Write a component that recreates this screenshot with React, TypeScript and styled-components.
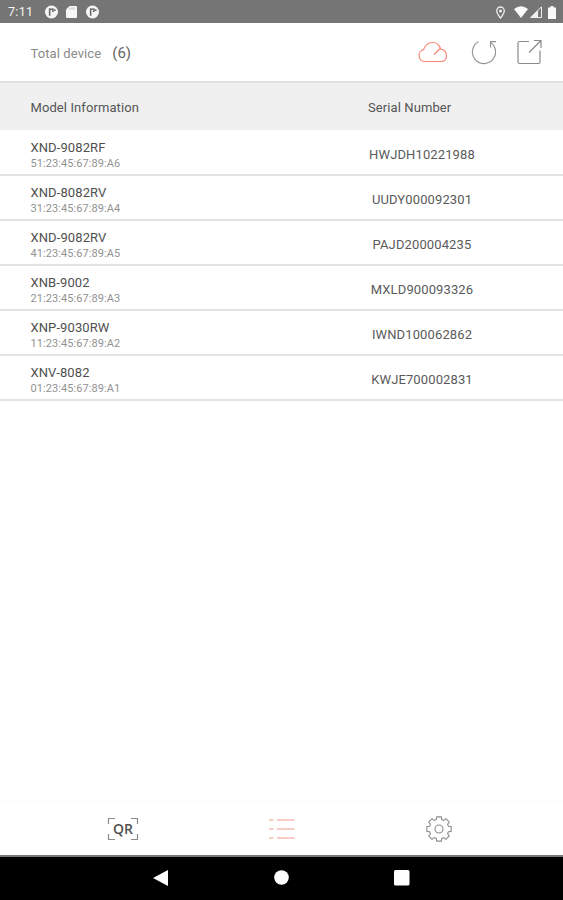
import React from "react";
import styled, { createGlobalStyle } from "styled-components";

const Global = createGlobalStyle`
  * { box-sizing: border-box; }
  body { margin: 0; background: #fff; font-family: Roboto, sans-serif; }
`;

const Screen = styled.div`
  width: 563px;
  height: 900px;
  display: flex;
  flex-direction: column;
  background: #fff;
  overflow: hidden;
`;

const StatusBar = styled.div`
  height: 23px;
  flex: none;
  background: #757575;
  display: flex;
  align-items: center;
  justify-content: space-between;
  padding: 1px 5px 0 8px;
  color: #f4f4f4;
`;

const StatusGroup = styled.div<{ $gap: number }>`
  display: flex;
  align-items: center;
  gap: ${(p) => p.$gap}px;
`;

const Clock = styled.span`
  font-size: 12.5px;
  line-height: 22px;
  letter-spacing: 0.3px;
  width: 28px;
`;

const Icon = styled.svg`
  display: block;
  flex: none;
`;

const TopBar = styled.header`
  height: 58px;
  flex: none;
  display: flex;
  align-items: center;
  padding: 0 20px 0 30.5px;
`;

const Title = styled.h1`
  margin: 0;
  font-size: 13px;
  font-weight: 400;
  color: #8a8a8a;
  letter-spacing: 0.1px;
  padding-top: 3px;
`;

const Count = styled.span`
  margin-left: 11px;
  font-size: 15px;
  color: #666;
  padding-top: 2px;
`;

const Actions = styled.div`
  margin-left: auto;
  display: flex;
  align-items: center;
  gap: 21px;
`;

const columns = `
  display: grid;
  grid-template-columns: 368px 108px;
  align-items: center;
`;

const TableHead = styled.div`
  ${columns}
  flex: none;
  height: 49px;
  background: #f0f0f0;
  border-top: 2px solid #e0e0e0;
  font-size: 13px;
  letter-spacing: 0.09px;
  color: #555;
  padding-top: 2px;
`;

const HeadCell = styled.div<{ $inset?: boolean }>`
  padding-left: ${(p) => (p.$inset ? 30.5 : 0)}px;
`;

const Row = styled.div`
  ${columns}
  height: 45px;
  border-bottom: 2px solid #e2e2e2;
`;

const Table = styled.div`
  flex: 1;
  padding-top: 1px;
`;

const Device = styled.div`
  padding: 7px 0 0 30.5px;
`;

const Model = styled.div`
  font-size: 13px;
  line-height: 16px;
  letter-spacing: 0.1px;
  color: #505050;
`;

const Mac = styled.div`
  font-size: 11px;
  line-height: 16px;
  letter-spacing: 0.08px;
  color: #929292;
`;

const Serial = styled.div`
  font-size: 13px;
  line-height: 16px;
  letter-spacing: 0.12px;
  color: #5a5a5a;
  text-align: center;
  padding-top: 4px;
`;

const TabBar = styled.nav`
  height: 54px;
  flex: none;
  display: grid;
  grid-template-columns: 246px 72px 242px;
  align-items: center;
  justify-items: center;
  border-top: 1px solid #fafafa;
`;

const SystemBar = styled.div`
  height: 45px;
  flex: none;
  background: #000;
  border-top: 2px solid #777;
  display: grid;
  grid-template-columns: 220px 122px 119px;
  align-items: center;
  padding-bottom: 2px;
`;

const NavKey = styled.div<{ $start: number }>`
  padding-left: ${(p) => p.$start}px;
`;

const Tab = styled.div`
  display: flex;
  padding-top: 1px;
`;

const QrFrame = styled.div`
  position: relative;
  width: 32px;
  height: 24px;
  display: flex;
  align-items: center;
  justify-content: center;
`;

const QrCorners = styled(Icon)`
  position: absolute;
  inset: 0;
`;

const QrText = styled.span`
  font: 600 14px/18px "Open Sans", sans-serif;
  color: #505050;
`;

const devices = [
  { model: "XND-9082RF", mac: "51:23:45:67:89:A6", serial: "HWJDH10221988" },
  { model: "XND-8082RV", mac: "31:23:45:67:89:A4", serial: "UUDY000092301" },
  { model: "XND-9082RV", mac: "41:23:45:67:89:A5", serial: "PAJD200004235" },
  { model: "XNB-9002", mac: "21:23:45:67:89:A3", serial: "MXLD900093326" },
  { model: "XNP-9030RW", mac: "11:23:45:67:89:A2", serial: "IWND100062862" },
  { model: "XNV-8082", mac: "01:23:45:67:89:A1", serial: "KWJE700002831" },
];

const AppBadge = () => (
  <Icon width="13" height="14" viewBox="0 0 14 14">
    <circle cx="7" cy="7" r="7" fill="#f6f6f6" />
    <path d="M5 3v8M5 4h2.500M8.500 3v4M10.500 4v2" fill="none" stroke="#6a6a6a" strokeWidth="1.700" />
  </Icon>
);

const SdCard = () => (
  <Icon width="11" height="12" viewBox="0 0 11 12">
    <path d="M3.5 0H10a1 1 0 0 1 1 1v10a1 1 0 0 1-1 1H1a1 1 0 0 1-1-1V3.5z" fill="#f6f6f6" />
    <path d="M4 1.5v2M6 1.5v2M8 1.5v2" stroke="#aaa" strokeWidth=".8" />
  </Icon>
);

const gearPath = (cx: number, cy: number) => {
  const teeth = 8;
  const points: string[] = [];
  for (let i = 0; i < teeth; i++) {
    const base = (i * 360) / teeth - 90;
    [[-16, 9.8], [-11, 12.4], [11, 12.4], [16, 9.8]].forEach(([offset, r]) => {
      const a = ((base + offset) * Math.PI) / 180;
      points.push(`${(cx + r * Math.cos(a)).toFixed(2)} ${(cy + r * Math.sin(a)).toFixed(2)}`);
    });
  }
  return `M${points.join("L")}Z`;
};

export default function App() {
  return (
    <>
      <Global />
      <Screen>
        <StatusBar>
          <StatusGroup $gap={8.5}>
            <Clock>7:11</Clock>
            <AppBadge />
            <SdCard />
            <AppBadge />
          </StatusGroup>
          <StatusGroup $gap={2}>
            <Icon width="17" height="13" viewBox="0 0 17 13">
              <path d="M5.500 1a3.800 3.800 0 0 1 3.800 3.800C9.300 7.500 5.500 12 5.500 12S1.700 7.500 1.700 4.800A3.800 3.800 0 0 1 5.500 1z" fill="none" stroke="#eee" strokeWidth="1.300" />
              <circle cx="5.500" cy="5" r="1.500" fill="#eee" />
            </Icon>
            <Icon width="14" height="12" viewBox="0 0 14 12">
              <path d="M0 3Q7-2.400 14 3L7 12z" fill="#fafafa" />
            </Icon>
            <Icon width="12" height="12" viewBox="0 0 12 12">
              <path d="M11.500 .8V11.500H.8z" fill="none" stroke="#eee" />
              <path d="M0 12L8 4v8z" fill="#eee" />
            </Icon>
            <Icon width="14" height="13" viewBox="0 0 14 13">
              <path d="M4 1.500h2.500V0h3v1.500h2.500V13H4V1.500z" fill="#fafafa" />
            </Icon>
          </StatusGroup>
        </StatusBar>

        <TopBar>
          <Title>Total device</Title>
          <Count>(6)</Count>
          <Actions>
            <Icon width="32" height="24" viewBox="0 0 32 24" fill="none" stroke="#f68672" strokeWidth="1.200">
              <path d="M8 21.500a6 6 0 0 1-1.500-11.800C8 5.500 11.500 2.500 15.500 2.500c4 0 6.800 2.300 8 6.200M23 9c4.500.5 6.500 3.500 6.500 7 0 3.500-2.500 5.500-5.500 5.500H8M17 14.500l6-5.800" />
            </Icon>
            <Icon width="26" height="26" viewBox="-1 0 26 26" fill="none" stroke="#929292" strokeWidth="1.100">
              <path d="M7.500 2.800A11.600 11.600 0 1 0 19.500 3.400M25 2.600h-5.500v6" />
            </Icon>
            <Icon width="26" height="26" viewBox="0 0 26 26" fill="none" stroke="#8a8a8a" strokeWidth="1.200">
              <path d="M12 2.500H2.500q-1.500 0-1.500 1.500v19q0 1.500 1.500 1.500h19q1.500 0 1.500-1.500V11.500M12 13.500L24 1.500M17 1.500h7V9" />
            </Icon>
          </Actions>
        </TopBar>

        <TableHead>
          <HeadCell $inset>Model Information</HeadCell>
          <HeadCell>Serial Number</HeadCell>
        </TableHead>
        <Table>
          {devices.map((d) => (
            <Row key={d.mac}>
              <Device>
                <Model>{d.model}</Model>
                <Mac>{d.mac}</Mac>
              </Device>
              <Serial>{d.serial}</Serial>
            </Row>
          ))}
        </Table>

        <TabBar>
          <Tab>
            <QrFrame>
              <QrCorners width="32" height="24" viewBox="0 0 32 24" fill="none" stroke="#8c8c8c" strokeWidth="1.200">
                <path d="M1.500 7V1.500H8M24 1.500h6.500V7M30.500 17v5.500H24M8 22.500H1.500V17" />
              </QrCorners>
              <QrText>QR</QrText>
            </QrFrame>
          </Tab>
          <Tab>
            <Icon width="26" height="22" viewBox="0 0 26 22" stroke="#f29a8d" strokeWidth="1.100">
              <path d="M0 2h4.500M8 2h17.500M0 11h4.500M8 11h17.500M0 20h4.500M8 20h17.500" />
            </Icon>
          </Tab>
          <Tab>
            <Icon width="28" height="28" viewBox="0 0 28 28" fill="none" stroke="#8c8c8c" strokeWidth="1.100" strokeLinejoin="round">
              <path d={gearPath(14, 14)} />
              <circle cx="14" cy="14" r="4" />
            </Icon>
          </Tab>
        </TabBar>

        <SystemBar>
          <NavKey $start={153}>
            <Icon width="15" height="16" viewBox="0 0 15 16"><path d="M0 8L15 0v16z" fill="#fff" /></Icon>
          </NavKey>
          <NavKey $start={54}>
            <Icon width="15" height="15" viewBox="0 0 15 15"><circle cx="7.500" cy="7.500" r="7.300" fill="#fff" /></Icon>
          </NavKey>
          <NavKey $start={52}>
            <Icon width="16" height="16" viewBox="0 0 16 16"><rect width="15.500" height="15.500" rx="1.500" fill="#fff" /></Icon>
          </NavKey>
        </SystemBar>
      </Screen>
    </>
  );
}
